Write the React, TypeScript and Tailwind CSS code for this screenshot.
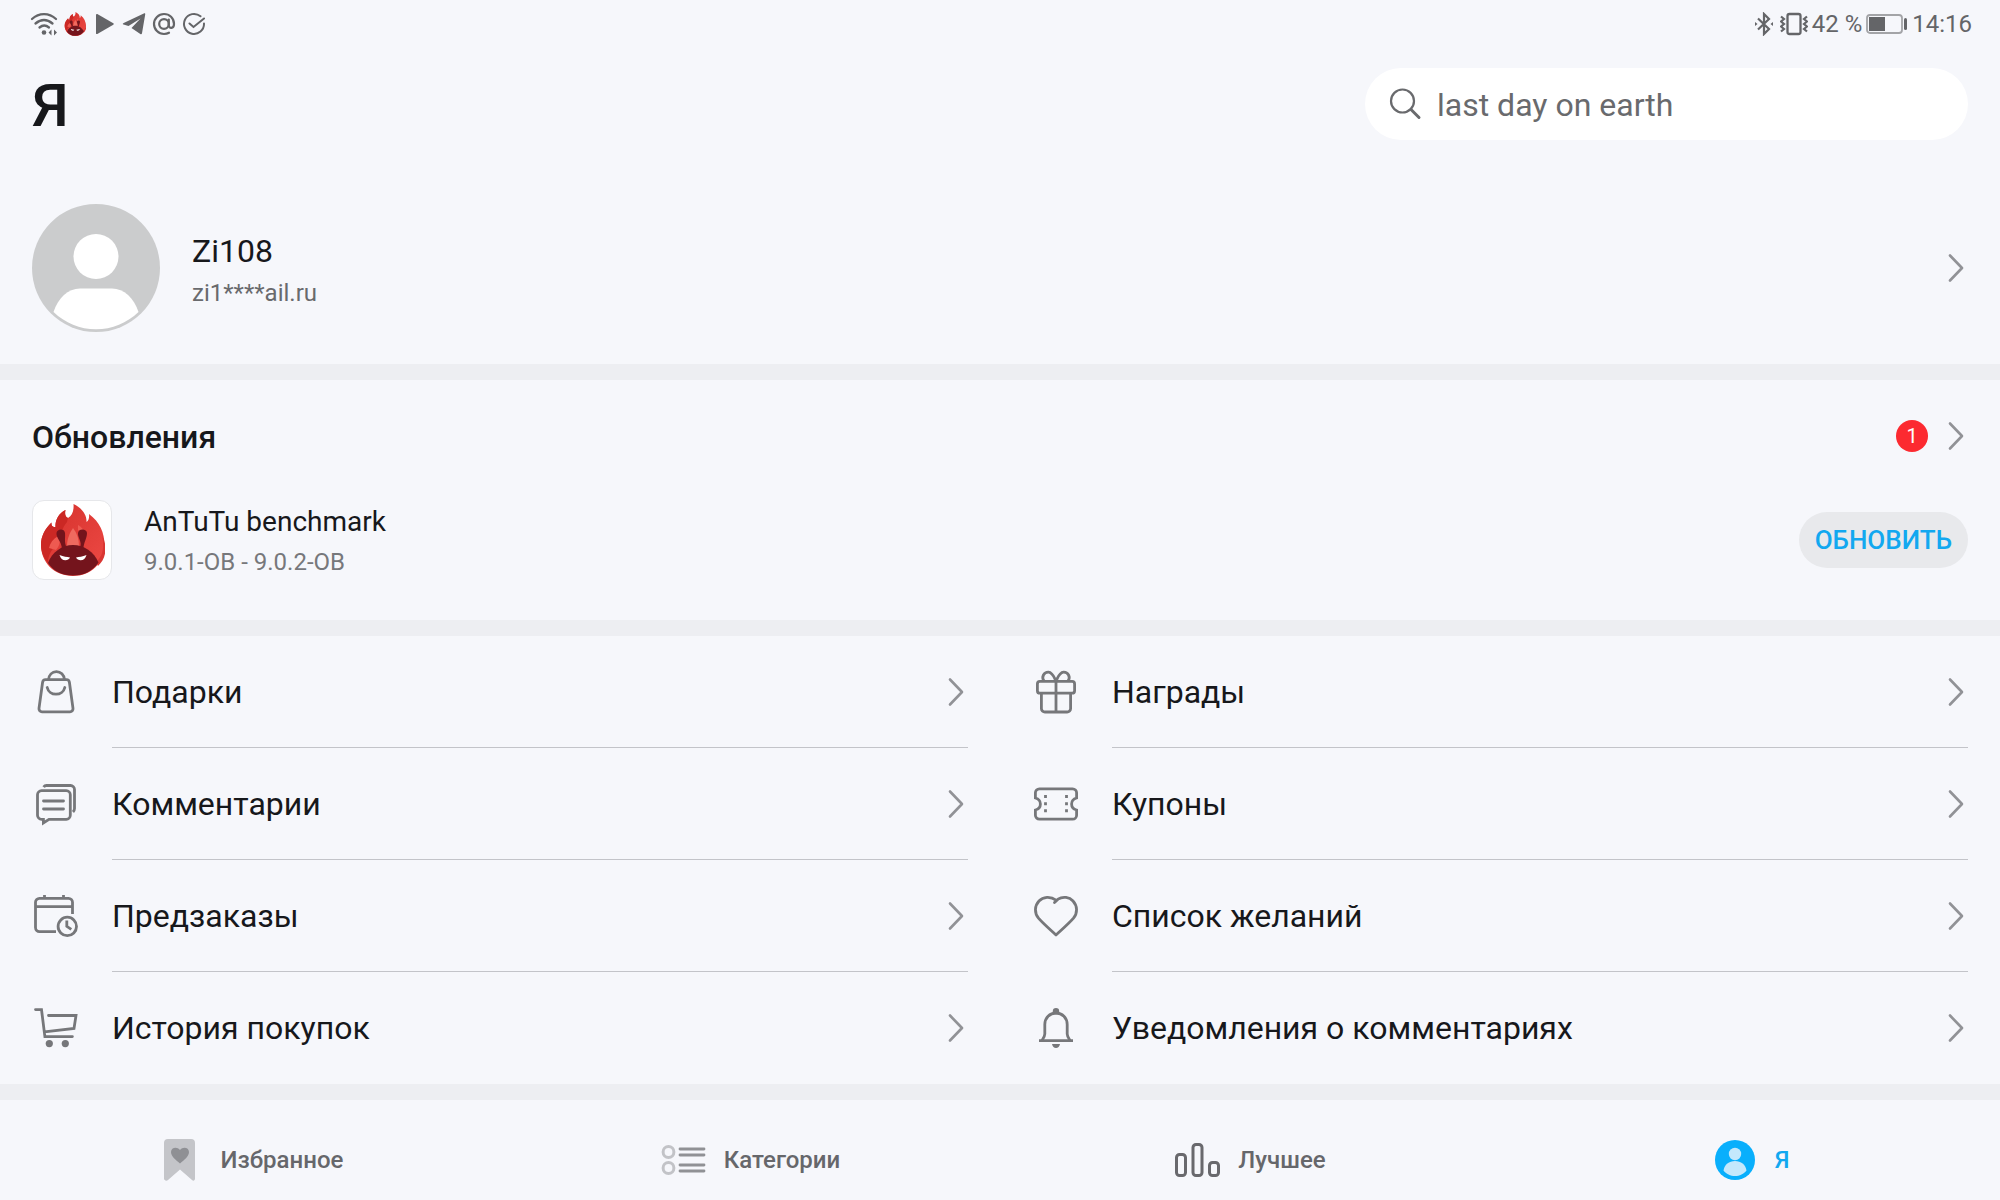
import type { ReactNode } from "react";

function Icon({ children }: { children: ReactNode }) {
  return (
    <svg
      viewBox="0 0 48 48"
      className="size-12 shrink-0 text-[#76777a]"
      fill="none"
      stroke="currentColor"
      strokeWidth="2.8"
      aria-hidden="true"
    >
      {children}
    </svg>
  );
}

const menuItems = [
  {
    label: "Подарки",
    icon: (
      <Icon>
        <path d="M13.6 11.6h20.8a3 3 0 0 1 3 2.6l3.6 26.2a3 3 0 0 1-3 3.4H10a3 3 0 0 1-3-3.4l3.6-26.2a3 3 0 0 1 3-2.6Z" />
        <path d="M16.6 11.4C17 7 20 3.6 24.4 3.6S32 7 32.4 11.4" />
        <path d="M15.2 19.5a9 8.5 0 0 0 17.6 0" strokeLinecap="round" />
      </Icon>
    ),
  },
  {
    label: "Награды",
    icon: (
      <Icon>
        <rect x="5.4" y="13.4" width="37.2" height="11.8" rx="2.5" />
        <path d="M9.4 25.2V40.5a3.5 3.5 0 0 0 3.5 3.5h22.2a3.5 3.5 0 0 0 3.5-3.5V25.2M24 13v31" />
        <path d="M12 13c-3-4 0-9 4.5-8.8C20.5 4.5 22 9 24 13c2-4 3.5-8.5 7.5-8.8C36 4 39 9 36 13" />
      </Icon>
    ),
  },
  {
    label: "Комментарии",
    icon: (
      <Icon>
        <path d="M9.5 10.7h24.8a4 4 0 0 1 4 4v20.6a4 4 0 0 1-4 4H17L11.4 43v-3.7H9.5a4 4 0 0 1-4-4V14.7a4 4 0 0 1 4-4Z" />
        <path d="M11.5 7c.8-1 1.800-1.500 3-1.500h24a4 4 0 0 1 4 4v19c0 1.500-.5 2.500-1.500 3.500" />
        <path d="M11.500 21h20M11.500 29h20" strokeLinecap="round" />
      </Icon>
    ),
  },
  {
    label: "Купоны",
    icon: (
      <Icon>
        <path d="M7.4 8.8h33.2a4 4 0 0 1 4 4V18c-3 .8-5 3-5 6s2 5.2 5 6v5.2a4 4 0 0 1-4 4H7.4a4 4 0 0 1-4-4V30c3-.8 5-3 5-6s-2-5.2-5-6v-5.2a4 4 0 0 1 4-4Z" />
        <path d="M13.5 15v3m0 4.3v3m0 4v3m21-17.3v3m0 4.3v3m0 4v3" />
      </Icon>
    ),
  },
  {
    label: "Предзаказы",
    icon: (
      <Icon>
        <path d="M24 39.6H7.5a4 4 0 0 1-4-4V10.3a4 4 0 0 1 4-4h29a4 4 0 0 1 4 4V22M3.5 14.6h37M12.5 3v4M31.5 3v4" />
        <circle cx="35.3" cy="34.4" r="9.2" />
        <path d="M34.8 28.5v5.8l4.5 3" />
      </Icon>
    ),
  },
  {
    label: "Список желаний",
    icon: (
      <Icon>
        <path
          d="M22.5 10.5 26 7.2c5-3.3 11.5-2 15 1.8 4.6 5 4.7 12 .5 17.2C37 31.5 30.5 37 24 43 17.5 37 11 31.5 6.5 26.2 2.3 21 2.4 14 7 9c4-4.3 11.5-5 17-.8"
          strokeLinejoin="round"
          strokeLinecap="round"
        />
      </Icon>
    ),
  },
  {
    label: "История покупок",
    icon: (
      <Icon>
        <path
          d="M3.5 5.6h6l3.4 27h27.5M16.5 11.5H44l-2 13-29.5 3.4"
          strokeLinecap="round"
        />
        <circle cx="17.3" cy="39.6" r="3.6" fill="currentColor" stroke="none" />
        <circle cx="33.3" cy="39.6" r="3.6" fill="currentColor" stroke="none" />
      </Icon>
    ),
  },
  {
    label: "Уведомления о комментариях",
    icon: (
      <Icon>
        <path d="M10 36.500c1.800-2.500 2.800-4 2.800-6.500v-9.500C12.800 14 17.800 9 24 9s11.200 5 11.200 11.500V30c0 2.500 1 4 2.800 6.500" />
        <path d="M7 36.700h34" />
        <circle cx="24" cy="7.200" r="3.200" fill="currentColor" stroke="none" />
        <path d="M20 40h8c-.5 2.500-2 4-4 4s-3.500-1.500-4-4Z" fill="currentColor" stroke="none" />
      </Icon>
    ),
  },
];

const tabs = [
  {
    label: "Избранное",
    icon: (
      <svg viewBox="0 0 48 48" className="size-12" aria-hidden="true">
        <path
          d="M11 3h23a4 4 0 0 1 4 4v35.5c0 2-1.6 2.8-3 1.5L23 33.5 11 44c-1.4 1.3-4 .5-4-1.5V7a4 4 0 0 1 4-4Z"
          fill="#c4c5c9"
        />
        <path
          d="M23 27.5c-4.5-3.8-9-7.2-9-11.5 0-4.5 6-5.8 9-2 3-3.8 9-2.5 9 2 0 4.3-4.5 7.7-9 11.5Z"
          fill="#8f9094"
        />
      </svg>
    ),
  },
  {
    label: "Категории",
    icon: (
      <svg viewBox="0 0 48 48" className="size-12" fill="none" aria-hidden="true">
        <circle cx="8.5" cy="16" r="5.4" stroke="#c2c3c7" strokeWidth="3" />
        <circle cx="8.5" cy="32" r="5.4" stroke="#c2c3c7" strokeWidth="3" />
        <path
          d="M20 13h24M20 19h24M20 29h24M20 35h24"
          stroke="#909195"
          strokeWidth="2.8"
          strokeLinecap="round"
        />
      </svg>
    ),
  },
  {
    label: "Лучшее",
    icon: (
      <svg
        viewBox="0 0 48 48"
        className="size-12"
        fill="none"
        stroke="#69696d"
        strokeWidth="3"
        aria-hidden="true"
      >
        <rect x="2.5" y="18.5" width="9" height="21" rx="3" />
        <rect x="19" y="8.5" width="9" height="31" rx="3" />
        <rect x="35.5" y="26.5" width="9" height="13" rx="3" />
      </svg>
    ),
  },
  {
    label: "Я",
    active: true,
    icon: (
      <svg viewBox="0 0 48 48" className="size-12" aria-hidden="true">
        <circle cx="24" cy="24" r="20" fill="#09affc" />
        <circle cx="24" cy="18" r="6.2" fill="#c4e8fc" />
        <path d="M12.500 34.500c1-6 5.500-9.500 11.500-9.500s10.500 3.500 11.500 9.500c-2.500 3.500-7 5.500-11.500 5.500s-9-2-11.500-5.500Z" fill="#c4e8fc" />
      </svg>
    ),
  },
];

function Chevron() {
  return (
    <svg
      viewBox="0 0 24 32"
      className="h-8 w-6 shrink-0"
      fill="none"
      stroke="#919296"
      strokeWidth="2.6"
      strokeLinecap="round"
      strokeLinejoin="round"
      aria-hidden="true"
    >
      <path d="M6 3.5 18 16 6 28.5" />
    </svg>
  );
}

function AntutuLogo({ className }: { className: string }) {
  return (
    <svg viewBox="7 4 66 72" className={className} aria-hidden="true">
      <defs>
        <linearGradient id="flame" x1="0" y1="0" x2="1" y2="1">
          <stop offset="0" stopColor="#d4302b" />
          <stop offset="1" stopColor="#ee4a45" />
        </linearGradient>
      </defs>
      <path
        d="M41 76C22 76 9 62 9 45c0-9 4-16 10.500-22.500-.5 3 1 5 4 4.500C23 20 27 13 33.500 10c-1 4 0 7 2.500 8 4.500-2.500 6-8 5.500-14C50 8 55 15 54.500 22c2-1.500 3-4 2.500-8C68 22 72.500 33 72.500 45 72.500 63 59 76 41 76Z"
        fill="url(#flame)"
      />
      <path d="M33.500 10c-6.500 3-10.500 10-10 17-3 .5-4.500-1.500-4-4.500C13 29 9 36 9 45c0 7 3 13 7 18 0-8 4-15 10-19 2-8 4-16 9-22 .5-2 .5-3 1-4-2.500-1-3.500-4-2.500-8Z" fill="#cb2824" />
      <path d="M64 62c6-5 9-13 6-27 6 12 4 24-4 31Z" fill="#d93632" />
      <path d="M35 46c0-7 3-14 6-18 4 5 6 11 6 18Z" fill="#ef6a5f" />
      <path d="M17 48c1-5 4-9 9-12 3 5 2 9-2 14ZM46 25c4 2 6 5 6 9l-6-4Z" fill="#ee5a51" />
      <path d="M16 63c4-11 14-18 25-18s21 7 25.500 17.500C61 71 52 75.500 41 75.500S21 71 16 63Z" fill="#74141c" />
      <path
        d="M30 49c-.5-8-6-11-5.500-16 .5-4.500 8-5 8.500 0 .5 4.500-1 9 1.500 14ZM48 47c2.500-5-2.500-9-2-14s9-4.500 9 0c0 6-3.500 9-3.500 16Z"
        fill="#74141c"
      />
      <path d="M27.500 55c4 1.500 7.500 2 10.500 2.500-1 1.800-2.500 2.700-4.500 2.700-3 0-5-1.700-6-5.200ZM54.500 55c-4 1.500-7.500 2-10.500 2.500 1 1.800 2.500 2.700 4.500 2.700 3 0 5-1.700 6-5.200Z" fill="#fff" />
    </svg>
  );
}

function StatusBar() {
  return (
    <div className="flex h-12 items-center justify-between pr-7 pl-[30px] text-2xl text-[#646568]">
      <div className="flex items-center gap-1.5">
        <svg viewBox="0 0 28 24" className="h-6 w-7" fill="none" stroke="currentColor" strokeWidth="2.3" strokeLinecap="round" aria-hidden="true">
          <path d="M2 7c7-6.500 17-6.500 24 0M5.500 11.500c5.500-4.500 11.500-4.500 17 0M9.500 15.500c3-2.500 6.500-2.500 9.500 0" />
          <circle cx="14" cy="20.5" r="2.3" fill="currentColor" stroke="none" />
          <path d="m21.500 17.500-3 3 3 3ZM24 17.500v6l3-3Z" fill="currentColor" stroke="none" />
        </svg>
        <AntutuLogo className="h-6 w-[22px]" />
        <svg viewBox="0 0 24 24" className="size-6" fill="currentColor" aria-hidden="true">
          <path d="M4 2.800v18.400c0 .8.7 1 1.300.7l16-9.200c.6-.4.6-1 0-1.400l-16-9.200C4.700 1.800 4 2 4 2.800Z" />
        </svg>
        <svg viewBox="0 0 24 24" className="size-6" fill="currentColor" aria-hidden="true">
          <path d="M23.200 2.500 20 21.300c-.2 1-.9 1.200-1.700.7L9.500 16l9-9.500L6.500 14l-5-1.500c-1-.4-1-1.100.2-1.600L21.800 1.500c1-.4 1.600 0 1.400 1Z" />
        </svg>
        <svg viewBox="0 0 24 24" className="size-6" fill="none" stroke="currentColor" strokeWidth="2.2" strokeLinecap="round" aria-hidden="true">
          <circle cx="12" cy="12" r="4.8" />
          <path d="M16.800 7.500V13c0 4.300 5.200 3.800 5.200-1 0-6-4.500-10-10-10S2 6.500 2 12s4.500 10 10 10c2 0 3.500-.4 5-1.300" />
        </svg>
        <svg viewBox="0 0 24 24" className="size-6" fill="none" stroke="currentColor" strokeWidth="2" strokeLinecap="round" aria-hidden="true">
          <path d="M18.500 4.300A10 10 0 1 0 22 11.500M7.500 11.500l4 3.500L22 6.500" />
        </svg>
      </div>
      <div className="flex items-center">
        <svg viewBox="0 0 20 24" className="mr-1.5 h-6 w-5" fill="none" stroke="currentColor" strokeWidth="2.2" aria-hidden="true">
          <path d="m4 6.500 11 10.500-5 5V2l5 5L4 17.500" />
          <path d="m1 10 2.500 2L1 14ZM19 10l-2.500 2 2.500 2Z" fill="currentColor" stroke="none" />
        </svg>
        <svg viewBox="0 0 28 24" className="mr-1 h-6 w-7" fill="none" stroke="currentColor" strokeWidth="2.3" aria-hidden="true">
          <rect x="7.5" y="2" width="13" height="20" rx="2" />
          <path d="m1 4.500 3 2.500-3 2.500L4 12l-3 2.500L4 17l-3 2.500M27 4.500 24 7l3 2.500-3 2.500 3 2.500-3 2.500 3 2.500" strokeWidth="2.2" />
        </svg>
        <span>42 %</span>
        <svg viewBox="0 0 42 24" className="mx-1 h-6 w-[42px]" fill="none" aria-hidden="true">
          <rect x="1" y="3" width="35" height="18" rx="3" stroke="#a3a4a7" strokeWidth="1.8" />
          <rect x="3" y="5" width="16" height="14" fill="currentColor" />
          <rect x="38" y="6" width="3" height="12" rx="1.5" fill="currentColor" />
        </svg>
        <time>14:16</time>
      </div>
    </div>
  );
}

export default function App() {
  return (
    <div className="min-h-screen bg-[#f6f7fb] font-[Roboto,sans-serif] text-[#17181b]">
      <StatusBar />

      <header className="flex h-28 items-center justify-between px-8">
        <h1 className="pt-1 text-6xl font-medium">Я</h1>
        <label className="flex h-18 w-[603px] items-center gap-3 rounded-full bg-white px-6 text-[#696a6d]">
          <svg
            viewBox="0 0 36 36"
            className="size-9 shrink-0"
            fill="none"
            stroke="currentColor"
            strokeWidth="2.2"
            strokeLinecap="round"
            aria-hidden="true"
          >
            <circle cx="13.5" cy="15" r="11.5" />
            <path d="m22 23.500 8 8" strokeWidth="3" />
          </svg>
          <input
            type="search"
            aria-label="Поиск"
            placeholder="last day on earth"
            className="min-w-0 flex-1 bg-transparent pt-0.5 text-[32px] leading-10 outline-none placeholder:text-[#696a6d]"
          />
        </label>
      </header>

      <main>
        <a href="#profile" className="flex items-center px-8 pt-11 pb-8">
          <svg viewBox="0 0 128 128" className="size-32 shrink-0" aria-hidden="true">
            <circle cx="64" cy="64" r="64" fill="#cbcccd" />
            <circle cx="64" cy="52.5" r="22.5" fill="#fff" />
            <path d="M21.500 108C26 94 36 84.500 48 84.500h32c12 0 22 9.500 26.500 23.500C95 119 80 125.300 64 125.300S33 119 21.500 108Z" fill="#fff" />
          </svg>
          <div className="min-w-0 flex-1 pt-1.5 pl-8">
            <div className="text-[32px] leading-10">Zi108</div>
            <div className="mt-1 text-2xl leading-9 text-[#696a6d]">zi1****ail.ru</div>
          </div>
          <Chevron />
        </a>

        <section className="border-y-16 border-[#edeef2]">
          <a href="#updates" className="flex h-28 items-center gap-4 px-8">
            <h2 className="flex-1 pt-0.5 text-[32px] font-medium">Обновления</h2>
            <span className="flex size-8 items-center justify-center rounded-full bg-[#fc2a30] text-xl text-white">
              1
            </span>
            <Chevron />
          </a>
          <div className="flex items-center px-8 pt-2 pb-10">
            <div className="flex size-20 shrink-0 items-center justify-center rounded-xl border border-[#e6e7ea] bg-white">
              <AntutuLogo className="h-18 w-[66px]" />
            </div>
            <div className="min-w-0 flex-1 pt-1 pl-8">
              <div className="text-[28px] leading-9">AnTuTu benchmark</div>
              <div className="mt-1 text-2xl leading-9 text-[#77787b]">9.0.1-OB - 9.0.2-OB</div>
            </div>
            <button className="h-14 rounded-full bg-[#e8e9ec] px-4 text-[26px] font-medium text-[#12a8f0]">
              ОБНОВИТЬ
            </button>
          </div>
        </section>

        <nav className="grid grid-cols-2 border-b-16 border-[#edeef2]">
          {menuItems.map((item, i) => (
            <a
              key={item.label}
              href="#menu"
              className="flex h-28 items-center gap-8 px-8"
            >
              {item.icon}
              <span
                className={`flex h-full min-w-0 flex-1 items-center justify-between border-b text-[32px] ${
                  i < menuItems.length - 2 ? "border-[#c3c4c9]" : "border-transparent"
                }`}
              >
                {item.label}
                <Chevron />
              </span>
            </a>
          ))}
        </nav>
      </main>

      <nav className="flex pt-5">
        {tabs.map((tab) => (
          <a
            key={tab.label}
            href="#tab"
            aria-current={tab.active ? "page" : undefined}
            className={`flex h-20 flex-1 items-center justify-center gap-4 text-2xl font-medium ${
              tab.active ? "text-[#12a8f0]" : "text-[#66676b]"
            }`}
          >
            {tab.icon}
            {tab.label}
          </a>
        ))}
      </nav>
    </div>
  );
}
